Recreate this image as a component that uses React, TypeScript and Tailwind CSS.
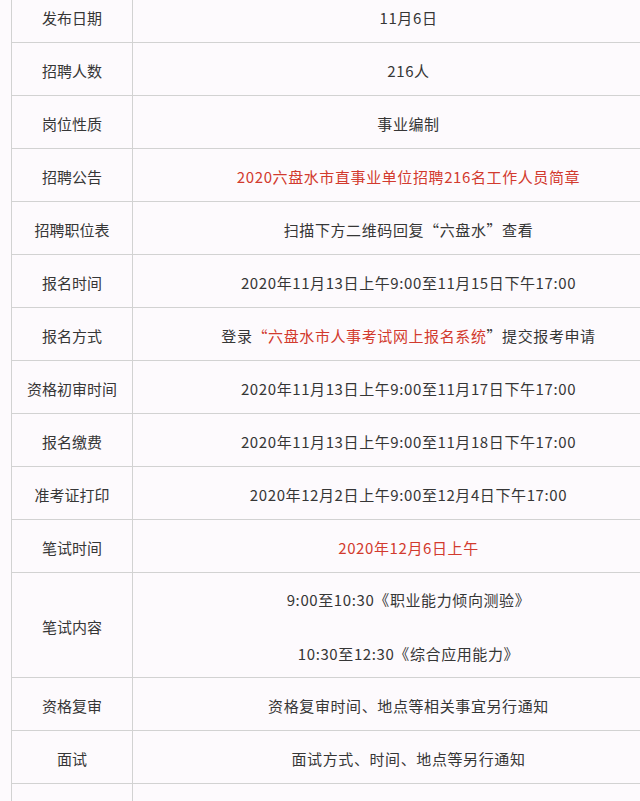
const RED = 'text-[#d23a2e]'

type Row = { label: string; value: React.ReactNode; tall?: boolean }

const rows: Row[] = [
  { label: '发布日期', value: '11月6日' },
  { label: '招聘人数', value: '216人' },
  { label: '岗位性质', value: '事业编制' },
  { label: '招聘公告', value: <span className={RED}>2020六盘水市直事业单位招聘216名工作人员简章</span> },
  { label: '招聘职位表', value: '扫描下方二维码回复“六盘水”查看' },
  { label: '报名时间', value: '2020年11月13日上午9:00至11月15日下午17:00' },
  {
    label: '报名方式',
    value: (
      <>
        登录<span className={RED}>“六盘水市人事考试网上报名系统</span>”提交报考申请
      </>
    ),
  },
  { label: '资格初审时间', value: '2020年11月13日上午9:00至11月17日下午17:00' },
  { label: '报名缴费', value: '2020年11月13日上午9:00至11月18日下午17:00' },
  { label: '准考证打印', value: '2020年12月2日上午9:00至12月4日下午17:00' },
  { label: '笔试时间', value: <span className={RED}>2020年12月6日上午</span> },
  {
    label: '笔试内容',
    tall: true,
    value: (
      <div className="flex flex-col gap-[31px]">
        <span>9:00至10:30《职业能力倾向测验》</span>
        <span>10:30至12:30《综合应用能力》</span>
      </div>
    ),
  },
  { label: '资格复审', value: '资格复审时间、地点等相关事宜另行通知' },
  { label: '面试', value: '面试方式、时间、地点等另行通知' },
  { label: '', value: '' },
]

export default function App() {
  return (
    <div
      className="h-[801px] overflow-hidden bg-[#fdfafd] text-[#363636] text-[15px]"
      style={{ fontFamily: '"Noto Sans CJK SC", "Noto Sans", sans-serif' }}
    >
      <div className="ml-[11px] mt-[-10px] w-[673px] border-l border-[#d2d2d2]">
        {rows.map((r, i) => (
          <div
            key={i}
            className={`flex border-b border-[#d2d2d2] pt-[4px] ${r.tall ? 'h-[105px]' : 'h-[53px]'}`}
          >
            <div className="w-[121px] shrink-0 flex items-center justify-center border-r border-[#d2d2d2] -mt-[4px] pt-[4px]">
              {r.label}
            </div>
            <div className="flex-1 flex items-center justify-center text-center tracking-[0.6px]">
              {r.value}
            </div>
          </div>
        ))}
      </div>
    </div>
  )
}
